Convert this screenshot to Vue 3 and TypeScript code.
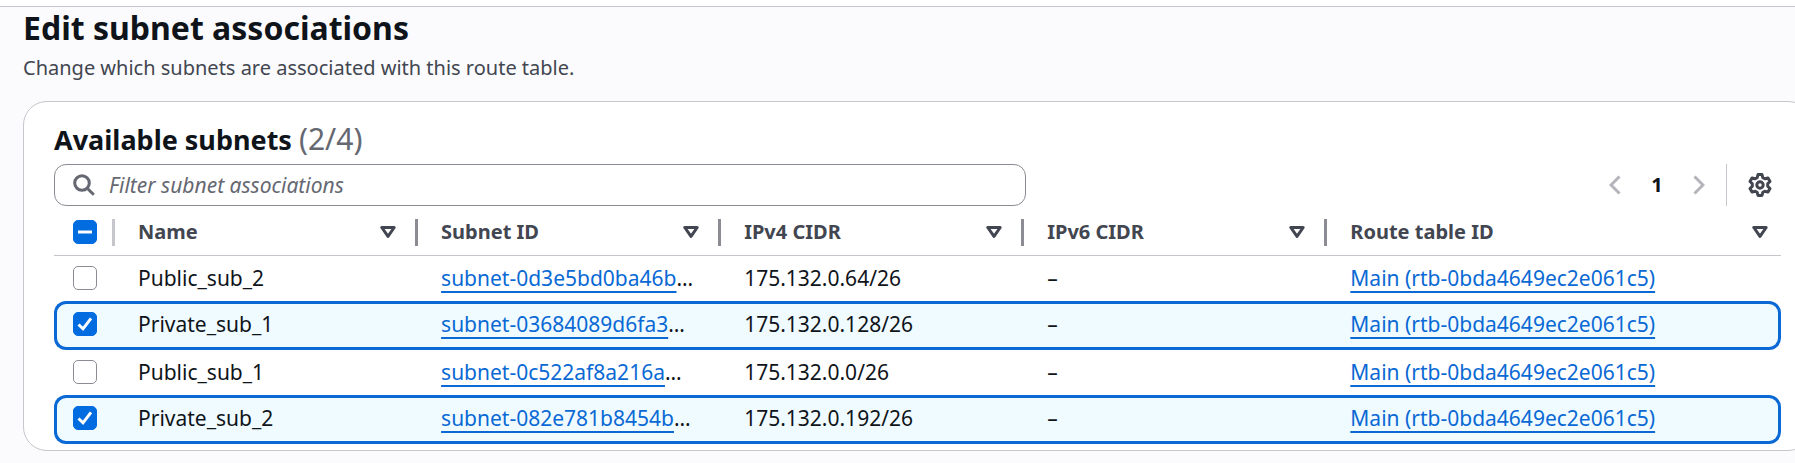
<script setup lang="ts">
import { computed, ref } from 'vue'

interface Subnet {
  name: string
  subnetId: string
  ipv4: string
  ipv6: string
  routeTable: string
  selected: boolean
}

const columns: string[] = ['Name', 'Subnet ID', 'IPv4 CIDR', 'IPv6 CIDR', 'Route table ID']

const subnets = ref<Subnet[]>([
  { name: 'Public_sub_2', subnetId: 'subnet-0d3e5bd0ba46b', ipv4: '175.132.0.64/26', ipv6: '–', routeTable: 'Main (rtb-0bda4649ec2e061c5)', selected: false },
  { name: 'Private_sub_1', subnetId: 'subnet-03684089d6fa3', ipv4: '175.132.0.128/26', ipv6: '–', routeTable: 'Main (rtb-0bda4649ec2e061c5)', selected: true },
  { name: 'Public_sub_1', subnetId: 'subnet-0c522af8a216a', ipv4: '175.132.0.0/26', ipv6: '–', routeTable: 'Main (rtb-0bda4649ec2e061c5)', selected: false },
  { name: 'Private_sub_2', subnetId: 'subnet-082e781b8454b', ipv4: '175.132.0.192/26', ipv6: '–', routeTable: 'Main (rtb-0bda4649ec2e061c5)', selected: true },
])

const filter = ref('')
const selectedCount = computed(() => subnets.value.filter((s) => s.selected).length)
const allSelected = computed(() => selectedCount.value === subnets.value.length)
const someSelected = computed(() => selectedCount.value > 0 && !allSelected.value)

function toggleAll(): void {
  const next = !allSelected.value
  subnets.value.forEach((s) => (s.selected = next))
}
</script>

<template>
  <main class="page">
    <header class="page-header">
      <h1>Edit subnet associations</h1>
      <p>Change which subnets are associated with this route table.</p>
    </header>

    <section class="card">
      <h2>Available subnets <span class="count">({{ selectedCount }}/{{ subnets.length }})</span></h2>

      <div class="tools">
        <label class="search">
          <svg class="search-icon" viewBox="0 0 22 22" aria-hidden="true">
            <circle cx="9" cy="9" r="7.3" />
            <path d="M14.2 14.2 20.8 20.8" />
          </svg>
          <input v-model="filter" type="text" placeholder="Filter subnet associations" aria-label="Filter subnet associations" />
        </label>

        <nav class="pager" aria-label="Pagination">
          <button type="button" class="arrow" aria-label="Previous page" disabled>
            <svg viewBox="0 0 12 20" aria-hidden="true"><path d="M10.5 1.5 2 10l8.5 8.5" /></svg>
          </button>
          <button type="button" class="current">1</button>
          <button type="button" class="arrow" aria-label="Next page" disabled>
            <svg viewBox="0 0 12 20" aria-hidden="true"><path d="M1.5 1.5 10 10l-8.5 8.5" /></svg>
          </button>
          <span class="rule"></span>
          <button type="button" class="gear" aria-label="Preferences">
            <svg viewBox="0 0 24 24" aria-hidden="true">
              <path d="M10 1.5h4l.8 3.2 2 1.1 3.2-.9 2 3.5-2.3 2.3v2.6l2.3 2.3-2 3.5-3.2-.9-2 1.1-.8 3.2h-4l-.8-3.2-2-1.1-3.2.9-2-3.5 2.3-2.3v-2.6L2 8.4l2-3.5 3.2.9 2-1.1z" />
              <circle cx="12" cy="12" r="3.2" />
            </svg>
          </button>
        </nav>
      </div>

      <table>
        <colgroup>
          <col class="col-check" />
          <col class="col-data" />
          <col class="col-data" />
          <col class="col-data" />
          <col class="col-data" />
          <col />
        </colgroup>
        <thead>
          <tr>
            <th scope="col">
              <div class="head check-head">
                <label class="check">
                  <input type="checkbox" aria-label="Select all subnets" :checked="allSelected" :indeterminate="someSelected" @change="toggleAll" />
                  <svg v-if="someSelected" viewBox="0 0 24 24" aria-hidden="true"><path d="M5 12h14" /></svg>
                </label>
                <span class="divider light"></span>
              </div>
            </th>
            <th v-for="(column, i) in columns" :key="column" scope="col">
              <div class="head">
                <span>{{ column }}</span>
                <button type="button" class="sort" :aria-label="`Sort by ${column}`">
                  <svg viewBox="0 0 16 12" aria-hidden="true"><path d="M1.8 1.5h12.4L8 10.4z" /></svg>
                </button>
                <span v-if="i < columns.length - 1" class="divider"></span>
              </div>
            </th>
          </tr>
        </thead>
        <tbody>
          <tr v-for="subnet in subnets" :key="subnet.name" :class="{ selected: subnet.selected }">
            <td>
              <label class="check">
                <input v-model="subnet.selected" type="checkbox" :aria-label="`Select ${subnet.name}`" />
                <svg v-if="subnet.selected" viewBox="0 0 24 24" aria-hidden="true"><path d="M5.5 12.5 10 16.8 18 6.3" /></svg>
              </label>
            </td>
            <td>{{ subnet.name }}</td>
            <td><a href="#">{{ subnet.subnetId }}</a>…</td>
            <td>{{ subnet.ipv4 }}</td>
            <td>{{ subnet.ipv6 }}</td>
            <td><a href="#">{{ subnet.routeTable }}</a></td>
          </tr>
        </tbody>
      </table>
    </section>
  </main>
</template>

<style>
html {
  background: #fbfbfd;
}
body {
  margin: 0;
  overflow: hidden;
}
</style>

<style scoped>
.page {
  box-sizing: border-box;
  padding: 0 0 8px 23px;
  border-top: 6px solid #fff;
  color: #0f141a;
  font-family: 'Noto Sans', 'Open Sans', sans-serif;
  font-size: 20px;
  line-height: 28px;
}
.page-header {
  margin-left: -23px;
  padding-left: 23px;
  border-top: 1px solid #c6c6cd;
}
h1,
h2,
p {
  margin: 0;
}
h1 {
  font-size: 32px;
  line-height: 42px;
}
p {
  margin-top: 5px;
  color: #424650;
}
.card {
  margin: 19px -17px 0 0;
  padding: 19px 30px 6px;
  border: 1px solid #c6c6cd;
  border-radius: 24px;
  background: #fff;
}
h2 {
  font-size: 27px;
  line-height: 36px;
  margin-bottom: 6px;
}
.count {
  color: #656871;
  font-size: 30px;
  font-weight: 400;
}
.tools {
  display: flex;
  justify-content: space-between;
}
.search {
  box-sizing: border-box;
  display: flex;
  align-items: center;
  gap: 14px;
  width: 56.3%;
  height: 42px;
  padding: 0 18px;
  border: 1px solid #8c8c94;
  border-radius: 12px;
}
.search-icon {
  flex: none;
  width: 22px;
  height: 22px;
  fill: none;
  stroke: #656871;
  stroke-width: 3;
}
.search input {
  flex: 1;
  min-width: 0;
  padding: 0;
  border: 0;
  outline: 0;
  background: none;
  color: inherit;
  font: inherit;
  font-size: 21px;
}
.search input::placeholder {
  color: #656871;
  font-style: italic;
  opacity: 1;
}
button {
  padding: 0;
  border: 0;
  background: none;
  color: inherit;
  font: inherit;
}
button svg {
  display: block;
  fill: none;
  stroke: #424650;
  stroke-width: 3;
}
.pager {
  display: flex;
}
.pager button {
  display: flex;
  align-items: center;
  justify-content: center;
  width: 42px;
  height: 42px;
}
.arrow svg {
  width: 12px;
  height: 20px;
  stroke: #b4b4bb;
}
.pager .current {
  font-weight: 700;
}
.rule {
  width: 1px;
  margin: 0 12px 0 6px;
  background: #c6c6cd;
}
.gear svg {
  width: 24px;
  height: 24px;
  stroke-linejoin: round;
}
table {
  width: 100%;
  margin-top: 3px;
  table-layout: fixed;
  border-collapse: separate;
  border-spacing: 0;
}
.col-check {
  width: 61px;
}
.col-data {
  width: 17.55%;
}
th {
  height: 46px;
  padding: 0;
  border-bottom: 1px solid #c6c6cd;
  color: #424650;
  font-weight: 700;
  text-align: left;
}
.head {
  display: flex;
  align-items: center;
  padding-left: 23px;
}
.check-head {
  justify-content: space-between;
  padding-left: 19px;
}
.sort {
  margin: 0 19px 0 auto;
}
th:last-child .sort {
  margin-right: 13px;
}
.sort svg {
  width: 16px;
  height: 12px;
  stroke-linejoin: round;
}
.divider {
  width: 3px;
  height: 27px;
  background: #8c8c94;
}
.divider.light {
  background: #c6c6cd;
}
td {
  box-sizing: border-box;
  height: 45px;
  padding: 0 0 2px 23px;
  font-size: 21px;
  white-space: nowrap;
}
td:first-child {
  padding-left: 19px;
}
.selected td {
  height: 49px;
  padding-bottom: 3px;
  border: 3px solid #0a69d4;
  border-width: 3px 0;
  background: #f0fbff;
}
.selected td:first-child {
  padding-left: 16px;
  border-left-width: 3px;
  border-radius: 12px 0 0 12px;
}
.selected td:last-child {
  border-right-width: 3px;
  border-radius: 0 12px 12px 0;
}
.check {
  display: grid;
  width: 24px;
  height: 24px;
}
.check input,
.check svg {
  grid-area: 1 / 1;
  width: 24px;
  height: 24px;
}
.check input {
  box-sizing: border-box;
  margin: 0;
  appearance: none;
  border: 1px solid #8c8c94;
  border-radius: 5px;
  background: #fff;
}
.check input:checked,
.check input:indeterminate {
  border-color: #006ce0;
  background: #006ce0;
}
.check svg {
  fill: none;
  stroke: #fff;
  stroke-width: 3;
  pointer-events: none;
}
a {
  color: #0a69d4;
  text-decoration: underline;
  text-decoration-thickness: 2px;
  text-decoration-skip-ink: none;
  text-underline-offset: 5px;
}
</style>
